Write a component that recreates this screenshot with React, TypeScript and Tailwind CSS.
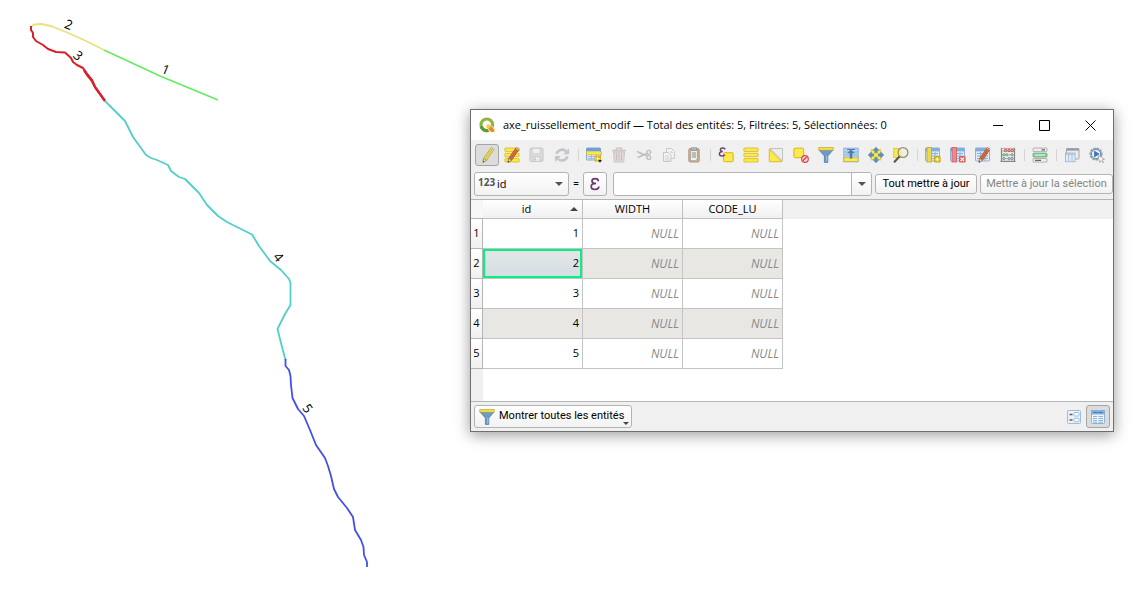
import React, { useState } from "react";

type IconProps = { children: React.ReactNode; dim?: boolean };

function Icon({ children, dim }: IconProps) {
  return (
    <svg viewBox="0 0 16 16" className={dim ? "size-4 opacity-40" : "size-4"} aria-hidden="true">
      {children}
    </svg>
  );
}

function Pencil({ color, dark }: { color: string; dark: string }) {
  return (
    <g>
      <path d="M12.2.6 15 2.4 7.6 13.2 4 15.4 4.6 11.4Z" fill={color} stroke={dark} strokeWidth="0.7" />
      <path d="M13.4 1.6 6 12.4" stroke={dark} strokeWidth="0.8" opacity="0.6" />
      <path d="M4.6 11.4 7.6 13.2 4 15.4Z" fill="#eeddb8" stroke="#7a6a4a" strokeWidth="0.5" />
      <path d="M4.2 14 5.3 14.6 4 15.4Z" fill="#333" />
      <path d="M11.6 1.4 12.2.6 15 2.4 14.4 3.2Z" fill="#c8c8c8" />
    </g>
  );
}

function TableSheet() {
  return (
    <g>
      <rect x="0.5" y="1" width="14" height="13" rx="0.8" fill="#dfeaf6" stroke="#8fb2d9" />
      <rect x="0.5" y="1" width="14" height="3.4" fill="#82aede" />
      <path d="M2 6.5h11M2 9h11M2 11.5h11M5.5 5v9M10 5v9" stroke="#8fb2d9" />
    </g>
  );
}

function Funnel() {
  return (
    <g>
      <path d="M1 3h14L9.8 9v6.4H6.4V9Z" fill="#6b9acb" stroke="#4d7cb0" strokeWidth="0.8" />
      <path d="M8.8 8.6v6" stroke="#a5c4e4" />
      <rect x="0.8" y="0.6" width="14.4" height="2.6" fill="#f5e04a" stroke="#b8a53a" strokeWidth="0.7" />
    </g>
  );
}

function Bars() {
  return (
    <g fill="#fce94f" stroke="#d5b912" strokeWidth="0.8">
      <rect x="0.9" y="1" width="14.2" height="3.4" rx="0.5" />
      <rect x="0.9" y="6.3" width="14.2" height="3.4" rx="0.5" />
      <rect x="0.9" y="11.6" width="14.2" height="3.4" rx="0.5" />
    </g>
  );
}

type Tool = { label: string; icon: React.ReactNode; active?: boolean; disabled?: boolean };

const groups: Tool[][] = [
  [
    { label: "Basculer en mode édition", active: true, icon: <Icon><Pencil color="#f3df55" dark="#a79a3c" /></Icon> },
    { label: "Édition multiple", icon: <Icon><Bars /><Pencil color="#e2713c" dark="#8f4a2a" /></Icon> },
    {
      label: "Enregistrer",
      disabled: true,
      icon: (
        <Icon dim>
          <path d="M1 2.200 2 1h11l1 1v11.500l-1 1H2l-1-1Z" fill="#b9bbbd" stroke="#85898c" />
          <rect x="3.500" y="1.500" width="7.500" height="5" fill="#f1f1f1" stroke="#999" strokeWidth="0.6" />
          <rect x="4" y="9.500" width="7" height="4.800" fill="#e6e6e6" stroke="#888" strokeWidth="0.7" />
          <path d="M6 10.500v3" stroke="#777" strokeWidth="1.400" />
        </Icon>
      ),
    },
    {
      label: "Recharger",
      disabled: true,
      icon: (
        <Icon dim>
          <path d="M2.600 6.800A5.600 5.600 0 0 1 12 4.400M13.400 9.400A5.600 5.600 0 0 1 4 11.800" fill="none" stroke="#7f8a94" strokeWidth="2.600" />
          <path d="M15 1.200v6H9.200ZM1 15V9h5.800Z" fill="#7f8a94" />
        </Icon>
      ),
    },
  ],
  [
    {
      label: "Ajouter une entité",
      icon: (
        <Icon>
          <rect x="0.500" y="1" width="14" height="12" rx="0.800" fill="#e6edf6" stroke="#7da7d8" />
          <rect x="0.500" y="1" width="14" height="3" fill="#6f9fd4" />
          <path d="M2 9.500h11M2 11.500h11M5.500 8v5M10 8v5" stroke="#9dbbe0" />
          <rect x="0.300" y="4.800" width="15" height="3" fill="#fce94f" stroke="#c6ac2a" strokeWidth="0.600" />
          <rect x="8.600" y="8.600" width="6.400" height="6.200" rx="1" fill="#d8b521" />
          <path d="M11.600 9.500v4.400M9.400 11.700h4.400" stroke="#fff6c0" />
          <path d="M12 13h4l-2 2.800Z" fill="#222" />
        </Icon>
      ),
    },
    {
      label: "Supprimer les entités",
      disabled: true,
      icon: (
        <Icon dim>
          <path d="M2.500 5h11l-.8 10H3.300Z" fill="#c9b9b7" stroke="#9f8583" />
          <path d="M5.500 6.500v7M8 6.500v7M10.500 6.500v7" stroke="#8f7472" />
          <path d="M1.200 3.600h13.600M5.500 3V1.300h5V3" fill="none" stroke="#9f8583" strokeWidth="1.600" />
        </Icon>
      ),
    },
    {
      label: "Couper",
      disabled: true,
      icon: (
        <Icon dim>
          <path d="M1 4.500 11 9M1.500 10.500 11 6.500" stroke="#72777b" strokeWidth="1.400" />
          <circle cx="12.800" cy="5.300" r="1.900" fill="none" stroke="#72777b" strokeWidth="1.300" />
          <circle cx="12.800" cy="10.500" r="1.900" fill="none" stroke="#72777b" strokeWidth="1.300" />
        </Icon>
      ),
    },
    {
      label: "Copier",
      disabled: true,
      icon: (
        <Icon dim>
          <path d="M5.500 1.500h5l3 3v7h-8Z" fill="#f6f6f6" stroke="#8a8f93" />
          <path d="M2.500 5.500h5l2.500 2.500v6.500H2.500Z" fill="#f6f6f6" stroke="#8a8f93" />
          <path d="M4 9h3.500M4 11h4.500M4 13h4.500M10 4v1.500h2" fill="none" stroke="#8a8f93" strokeWidth="0.800" />
        </Icon>
      ),
    },
    {
      label: "Coller",
      icon: (
        <Icon>
          <rect x="2.800" y="1.600" width="10.400" height="13.400" rx="1.200" fill="#cdb08c" stroke="#b59a7a" />
          <path d="M4.500 3.500h7v8.200l-2 2h-5Z" fill="#f2f2f0" stroke="#9a9a98" strokeWidth="0.700" />
          <rect x="5.300" y="0.800" width="5.400" height="2.800" fill="#b4b8ba" stroke="#878b8d" strokeWidth="0.600" />
          <path d="M5.800 6h4.400M5.800 8h4.400M5.800 10h4.400" stroke="#858889" />
        </Icon>
      ),
    },
  ],
  [
    {
      label: "Sélectionner avec une expression",
      icon: (
        <Icon>
          <rect x="5.500" y="5.700" width="9.700" height="9" rx="1" fill="#fce94f" stroke="#d5b912" />
          <path d="M7.200 2.200C5.500.3 2.400.9 2.400 2.800c0 1.200 1 1.700 2.400 1.700C2.800 4.500 1.400 5.300 1.400 6.900c0 2.300 3.700 2.700 5.600.8" fill="none" stroke="#6b3f70" strokeWidth="1.500" />
        </Icon>
      ),
    },
    { label: "Tout sélectionner", icon: <Icon><Bars /></Icon> },
    {
      label: "Inverser la sélection",
      icon: (
        <Icon>
          <path d="M2 1.500h12.500V14Z" fill="#eceded" stroke="#b4b6b6" strokeWidth="0.800" />
          <path d="M1.300 2v12.700H14Z" fill="#fce94f" stroke="#d5b912" strokeWidth="0.900" />
        </Icon>
      ),
    },
    {
      label: "Tout désélectionner",
      icon: (
        <Icon>
          <rect x="0.900" y="1.200" width="9.800" height="9.500" rx="1" fill="#fce94f" stroke="#d5b912" />
          <circle cx="12" cy="12" r="3.300" fill="#f8dada" stroke="#d9424a" strokeWidth="1.200" />
          <path d="m9.800 14.200 4.400-4.400M10.300 12.700l2.400-2.400" stroke="#d9424a" />
        </Icon>
      ),
    },
    { label: "Filtrer", icon: <Icon><Funnel /></Icon> },
    {
      label: "Déplacer la sélection au sommet",
      icon: (
        <Icon>
          <rect x="0.800" y="1.200" width="14.400" height="13.600" fill="#b8d2ec" stroke="#8fb2d9" />
          <path d="M1.500 5h13M1.500 8h13" stroke="#8fb2d9" strokeWidth="0.800" />
          <rect x="0.800" y="10.800" width="14.400" height="3.600" fill="#fce94f" stroke="#c9b238" strokeWidth="0.700" />
          <path d="M8 2.500 12 6.200H9.300v5.300H6.700V6.200H4Z" fill="#4a7fb5" />
          <path d="M4 2.500h8" stroke="#4a7fb5" />
        </Icon>
      ),
    },
    {
      label: "Centrer la carte sur la sélection",
      icon: (
        <Icon>
          <path d="M3 2.500h10v10.500H3Z" fill="#fce94f" stroke="#d9c03a" strokeWidth="0.600" />
          <path d="m8 0 3.200 3.400H9.300v2.400H6.700V3.400H4.800ZM8 16l3.200-3.400H9.300v-2.400H6.700v2.400H4.800ZM0 8l3.400-3.200v1.900h2.400v2.600H3.400v1.900ZM16 8l-3.400-3.200v1.900h-2.400v2.600h2.400v1.900Z" fill="#5f8dbd" stroke="#4f769f" strokeWidth="0.300" />
        </Icon>
      ),
    },
    {
      label: "Zoomer sur la sélection",
      icon: (
        <Icon>
          <rect x="0.800" y="1.500" width="7" height="9" fill="#fce94f" stroke="#d5b912" strokeWidth="0.700" />
          <path d="M6.500 9.500 1.600 14.700" stroke="#555" strokeWidth="2" strokeLinecap="round" />
          <circle cx="10" cy="5.500" r="4.900" fill="#f1f0d8" fillOpacity="0.850" stroke="#8b8c86" strokeWidth="1.200" />
          <path d="M6.200 5h3.300v4.300H7Z" fill="#f6e978" opacity="0.600" />
        </Icon>
      ),
    },
  ],
  [
    {
      label: "Nouveau champ",
      icon: (
        <Icon>
          <TableSheet />
          <rect x="2" y="0.600" width="4.400" height="14.400" fill="#f0d94a" stroke="#bda32a" strokeWidth="0.800" />
          <rect x="9" y="9" width="6.600" height="6.600" rx="1" fill="#c9a91c" />
          <path d="M12.300 10v4.600M10 12.300h4.600M10.700 10.700l3.200 3.200M13.900 10.700l-3.200 3.200" stroke="#fff4b4" strokeWidth="0.900" />
        </Icon>
      ),
    },
    {
      label: "Supprimer le champ",
      icon: (
        <Icon>
          <TableSheet />
          <rect x="2" y="0.600" width="4.400" height="14.400" fill="#ec8a8a" stroke="#cc5a5c" strokeWidth="0.800" />
          <rect x="9" y="9" width="6.600" height="6.600" rx="1" fill="#dd5d61" />
          <path d="m10.600 10.600 3.400 3.400M14 10.600 10.600 14" stroke="#fff" strokeWidth="1.200" />
        </Icon>
      ),
    },
    { label: "Organiser les colonnes", icon: <Icon><TableSheet /><Pencil color="#e2713c" dark="#8f4a2a" /></Icon> },
    {
      label: "Calculatrice de champ",
      icon: (
        <Icon>
          <path d="M1.500 1v14M14.500 1v14M.5 14.300h15" stroke="#858585" strokeWidth="1.200" />
          <path d="M1.500 1.400h13M1.500 4h13M1.500 8h13M1.500 11.500h13" stroke="#999" strokeWidth="0.700" />
          <g fill="#f0a0a4" stroke="#ca3a40" strokeWidth="0.800">
            <circle cx="5.500" cy="3.500" r="1.300" />
            <circle cx="9" cy="3.500" r="1.300" />
            <circle cx="12.300" cy="3.500" r="1.300" />
          </g>
          <g fill="#a8d8b0" stroke="#4d9c62" strokeWidth="0.700">
            <circle cx="3.800" cy="7.800" r="1.200" />
            <circle cx="6.800" cy="7.800" r="1.200" />
            <circle cx="12" cy="7.800" r="1.200" />
          </g>
          <g fill="#c8d4de" stroke="#5f7284" strokeWidth="0.700">
            <circle cx="4" cy="11.600" r="1.200" />
            <circle cx="9" cy="11.600" r="1.200" />
            <circle cx="12" cy="11.600" r="1.200" />
          </g>
        </Icon>
      ),
    },
  ],
  [
    {
      label: "Mise en forme conditionnelle",
      icon: (
        <Icon>
          <rect x="1" y="1" width="14" height="3.600" rx="0.800" fill="#ededed" stroke="#a2a2a2" strokeWidth="0.800" />
          <rect x="1" y="6.200" width="14" height="3.800" rx="0.800" fill="#8fd09a" stroke="#5ea46c" strokeWidth="0.800" />
          <rect x="1" y="11.500" width="14" height="3.600" rx="0.800" fill="#ededed" stroke="#a2a2a2" strokeWidth="0.800" />
          <path d="M9.500 2.800H13M3 13.300h6" stroke="#666" strokeWidth="1.200" />
          <path d="M3 8.100h10" stroke="#d7f2db" strokeWidth="1.200" />
        </Icon>
      ),
    },
  ],
  [
    {
      label: "Ancrer la table",
      icon: (
        <Icon>
          <rect x="2.500" y="1.500" width="12.500" height="10.500" rx="0.800" fill="#ececec" stroke="#a3a5a7" />
          <path d="M2.500 2.600H15" stroke="#9b9fa2" strokeWidth="2.200" />
          <rect x="1.500" y="6" width="9.500" height="8.700" fill="#e5eef8" stroke="#9ab7d6" strokeWidth="0.900" />
          <path d="M1.500 7.200H11M4.700 7v7.500M8 7v7.500" stroke="#9ab7d6" strokeWidth="0.900" />
        </Icon>
      ),
    },
    {
      label: "Actions",
      icon: (
        <Icon>
          <circle cx="7" cy="7" r="5.800" fill="#aebdca" stroke="#8a9fb3" strokeWidth="1.600" strokeDasharray="2.400 1" />
          <circle cx="7" cy="7" r="4.600" fill="#eaf1f8" stroke="#6c8cad" />
          <path d="M5.500 4.200 10 7l-4.500 2.800Z" fill="#3d76b4" stroke="#3d76b4" strokeWidth="0.800" />
          <path d="m9 8.500 6.500 3.800-2.600.5 2 2.400-1 .8-1.900-2.500-1.300 2Z" fill="#fff" stroke="#999" strokeWidth="0.700" />
        </Icon>
      ),
    },
  ],
];

const rows = [1, 2, 3, 4, 5];

const digit = "fill-black font-['Open_Sans',sans-serif] text-[13px]";

function StreamMap() {
  return (
    <svg viewBox="0 0 470 591" className="w-[470px] shrink-0" role="img" aria-label="Axes de ruissellement">
      <g fill="none" strokeWidth="1.800" strokeLinejoin="round">
        <path d="M104 50 160 76 218 100" stroke="#67ec62" />
        <path d="M31 27 34 24.500 41 24 51 26 66 32 84 40 104 50" stroke="#e9e27c" />
        <path d="M31 26 31 30 33 33 33 37 36 41 43 45 48 49 56 52 65 52.500 71 58 73 62 77 65 83 68 87 74 92 80 95 87 100 94 105 101" stroke="#da1f28" strokeWidth="2" />
        <path d="M84 70 88 76 92 81 95 87 100 94 105 101" stroke="#da1f28" strokeWidth="2.400" />
        <path d="M105 101 125 121 133 137 141 148 146 155 151 158 157 160 168 165 171 171 179 177 185 179 199 193 207 205 218 216 227 222 252 234.500 259 246 270 261 281 270 289 279 290.500 283 290.500 305 285 314 277.500 329 281 343 285.500 360" stroke="#50d0c8" />
        <path d="M285.500 359 285.500 366 289 370 290.500 376 291 385 292.500 398 298 409 304 416 310 430 316 445 325 458 328 466 331 476 334 489 338 497 347 508 353 517 355 530 361 540 363.500 547 364 555 367 562 367 567" stroke="#4350e8" />
      </g>
      <g textAnchor="middle" className={digit}>
        <text transform="translate(67 29) rotate(22)">2</text>
        <text transform="translate(164 74) rotate(22)">1</text>
        <text transform="translate(75 59) rotate(42)">3</text>
        <text transform="translate(275 260) rotate(50)">4</text>
        <text transform="translate(304 411) rotate(55)">5</text>
      </g>
    </svg>
  );
}

function Caption({ label, children }: { label: string; children: React.ReactNode }) {
  return (
    <button type="button" aria-label={label} className="flex h-7 w-[46px] items-center justify-center">
      <svg viewBox="0 0 11 11" className="size-[11px]" fill="none" stroke="#000" strokeWidth="1">
        {children}
      </svg>
    </button>
  );
}

const raised = "rounded-[3px] border border-[#b3b3b3] bg-linear-to-b from-white to-[#f2f2f2]";
const controlFont = "font-['Roboto','Open_Sans',sans-serif] text-[11px]";

export default function App() {
  const [value, setValue] = useState("");
  const [selected, setSelected] = useState(2);

  return (
    <main className="flex min-h-screen items-start bg-white font-['Open_Sans','Noto_Sans',sans-serif] text-xs text-black">
      <StreamMap />
      <section className="mt-[109px] mr-6 min-w-0 flex-1 border border-[#6f6f6f] bg-[#f0f0f0] shadow-[0_3px_14px_rgba(0,0,0,0.4)]">
        <header className="flex h-[30px] items-center bg-white pl-2">
          <svg viewBox="0 0 16 16" className="size-4" aria-hidden="true">
            <circle cx="7.800" cy="7.800" r="5.800" fill="none" stroke="#8db73c" strokeWidth="3.200" />
            <path d="M2.200 9.500A5.800 5.800 0 0 0 9 13.500" fill="none" stroke="#5c9a33" strokeWidth="3.200" />
            <path d="M7.300 7.300h3.400l5 5v3.200h-3.200l-5.200-5Z" fill="#ee8a22" stroke="#fff" strokeWidth="0.800" />
            <path d="M7.700 7.700h2.700l1.600 1.600-2.700 2.700-1.600-1.600Z" fill="#f5d04a" />
          </svg>
          <h1 className="ml-2 min-w-0 flex-1 truncate text-[11px]">
            axe_ruissellement_modif — Total des entités: 5, Filtrées: 5, Sélectionnées: 0
          </h1>
          <Caption label="Réduire"><path d="M0 5.500h10" /></Caption>
          <Caption label="Agrandir"><path d="M.5.5h10v10H.5Z" /></Caption>
          <Caption label="Fermer"><path d="m.5.5 10 10M10.500.5l-10 10" /></Caption>
        </header>

        <div role="toolbar" className="flex h-[30px] items-center gap-px pl-1">
          {groups.map((tools, g) => (
            <React.Fragment key={g}>
              {g > 0 && <span className="flex w-1.5 justify-center"><span className="h-3 w-px bg-[#d4d4d4]" /></span>}
              {tools.map((t) => (
                <button
                  key={t.label}
                  type="button"
                  aria-label={t.label}
                  disabled={t.disabled}
                  className={
                    "flex h-[22px] w-6 items-center justify-center rounded-[3px] border " +
                    (t.active ? "border-[#a5a5a5] bg-[#dcdcdc]" : "border-transparent")
                  }
                >
                  {t.icon}
                </button>
              ))}
            </React.Fragment>
          ))}
        </div>

        <div className={`mb-px flex h-7 items-center pl-[3px] ${controlFont}`}>
          <div className="relative">
            <span className="pointer-events-none absolute top-1 left-1 font-['Open_Sans',sans-serif] text-[10px] font-bold text-[#555]">123</span>
            <select aria-label="Champ" className={`${raised} h-6 w-[95px] appearance-none pl-[22px] font-['Open_Sans',sans-serif]`}>
              <option>id</option>
            </select>
            <svg viewBox="0 0 8 4" className="pointer-events-none absolute top-2.5 right-1.5 w-2"><path d="M0 0h8L4 4Z" fill="#555" /></svg>
          </div>
          <span className="w-3.5 text-center">=</span>
          <button type="button" aria-label="Expression" className={`${raised} flex size-6 items-center justify-center`}>
            <svg viewBox="0 0 12 14" className="h-3.5 w-3" fill="none" stroke="#683a6e" strokeWidth="1.700">
              <path d="M9.300 4.200C9.300 2.200 7.800 1.600 6.300 1.600 4.300 1.600 3 2.500 3 4c0 1.600 1.400 2.400 4 2.400C4 6.400 2.200 7.500 2.200 9.400c0 2 1.900 3 4.200 3 2 0 3.400-.9 3.500-2.900" />
            </svg>
          </button>
          <div className="ml-1.5 flex h-6 min-w-0 flex-1 overflow-hidden rounded-[3px] border border-[#b3b3b3] bg-white">
            <input
              aria-label="Valeur"
              value={value}
              onChange={(e) => setValue(e.target.value)}
              className="min-w-0 flex-1 px-1 outline-none"
            />
            <button type="button" aria-label="Valeurs récentes" className="flex w-5 items-center justify-center border-l border-[#b3b3b3] bg-linear-to-b from-white to-[#f2f2f2]">
              <svg viewBox="0 0 8 4" className="w-2"><path d="M0 0h8L4 4Z" fill="#555" /></svg>
            </button>
          </div>
          <button type="button" className={`${raised} ml-[3px] h-5 w-[102px] whitespace-nowrap`}>Tout mettre à jour</button>
          <button type="button" disabled className={`${raised} ml-[3px] h-5 w-[133px] whitespace-nowrap text-[#858585]`}>
            Mettre à jour la sélection
          </button>
        </div>

        <div className="border-y border-[#b5b5b5] bg-white">
          <table className="w-full table-fixed border-separate border-spacing-0">
            <colgroup>
              <col className="w-3" />
              <col className="w-[100px]" />
              <col className="w-[100px]" />
              <col className="w-[100px]" />
              <col />
            </colgroup>
            <thead>
              <tr className="h-[19px]">
                <th className="border-b border-[#b5b5b5] bg-[#f7f7f7] p-0" />
                {["id", "WIDTH", "CODE_LU"].map((name) => (
                  <th
                    key={name}
                    scope="col"
                    className="relative border-r border-b border-[#c0c0c0] bg-linear-to-b from-white to-[#f0f0f0] p-0 text-[11px] leading-4 font-normal"
                  >
                    {name === "id" ? <span className="pr-3">id</span> : name}
                    {name === "id" && (
                      <svg viewBox="0 0 8 4" className="absolute top-[7px] right-1 w-2"><path d="M0 4h8L4 0Z" fill="#444" /></svg>
                    )}
                  </th>
                ))}
                <th className="bg-[#f0f0f0] p-0" />
              </tr>
            </thead>
            <tbody>
              {rows.map((id) => (
                <tr key={id} className={id % 2 ? "h-[30px] bg-white" : "h-[30px] bg-[#e8e7e3]"}>
                  <th scope="row" className="border-r border-b border-[#b5b5b5] bg-linear-to-b from-white to-[#f0f0f0] p-0 text-[11px] font-normal">
                    {id}
                  </th>
                  <td onClick={() => setSelected(id)} className="h-[30px] border-r border-b border-[#c4c4c4] p-0 text-right text-[11px]">
                    <div
                      className={
                        "flex h-[29px] items-center justify-end border-2 pr-px " +
                        (id === selected ? "border-[#05f283] bg-linear-to-b from-[#e3e6e6] to-[#d5dee4]" : "border-transparent")
                      }
                    >
                      {id}
                    </div>
                  </td>
                  <td className="border-r border-b border-[#c4c4c4] py-0 pr-[3px] text-right text-[#8a8a8a] italic">NULL</td>
                  <td className="border-r border-b border-[#c4c4c4] py-0 pr-[3px] text-right text-[#8a8a8a] italic">NULL</td>
                  <td className="bg-white p-0" />
                </tr>
              ))}
            </tbody>
          </table>
          <div className="h-8 w-3 bg-[#f0f0f0]" />
        </div>

        <footer className={`flex h-[29px] items-center justify-between px-[3px] ${controlFont}`}>
          <button type="button" className={`${raised} relative flex h-[23px] w-[158px] items-center gap-1 pl-1 whitespace-nowrap`}>
            <Icon><Funnel /></Icon>
            Montrer toutes les entités
            <svg viewBox="0 0 6 3" className="absolute right-0.5 bottom-0.5 w-1.5"><path d="M0 0h6L3 3Z" fill="#444" /></svg>
          </button>
          <div className="flex">
            <button type="button" aria-label="Vue formulaire" className="flex h-[23px] w-6 items-center justify-center">
              <Icon>
                <rect x="1.500" y="1.500" width="13" height="13" rx="0.800" fill="#edf2f7" stroke="#9dbde0" />
                <path d="M3.500 5.500h3M3.500 11h3" stroke="#52606e" strokeWidth="1.400" />
                <rect x="8" y="3.500" width="5" height="3.500" rx="0.800" fill="#fff" stroke="#9dbde0" />
                <rect x="8" y="9.300" width="5" height="3.500" rx="0.800" fill="#fff" stroke="#9dbde0" />
              </Icon>
            </button>
            <button type="button" aria-label="Vue table" aria-pressed="true" className="flex h-[23px] w-6 items-center justify-center rounded-[3px] border border-[#a5a5a5] bg-[#dcdcdc]">
              <svg viewBox="0 0 16 16" className="size-4" aria-hidden="true">
                <rect x="1.500" y="1.500" width="13" height="13" rx="0.800" fill="#eef4fa" stroke="#8db2dc" />
                <rect x="1" y="1" width="14" height="4.500" fill="#82b0e0" />
                <path d="M3.500 3.500h4M8.500 3.500h4" stroke="#3f75b0" />
                <path d="M3 7.500h4M8.500 7.500H13M3 9.500h4M8.500 9.500H13M3 11.500h4M8.500 11.500H13M3 13.200h4M8.500 13.200H13" stroke="#8db2dc" />
              </svg>
            </button>
          </div>
        </footer>
      </section>
    </main>
  );
}
